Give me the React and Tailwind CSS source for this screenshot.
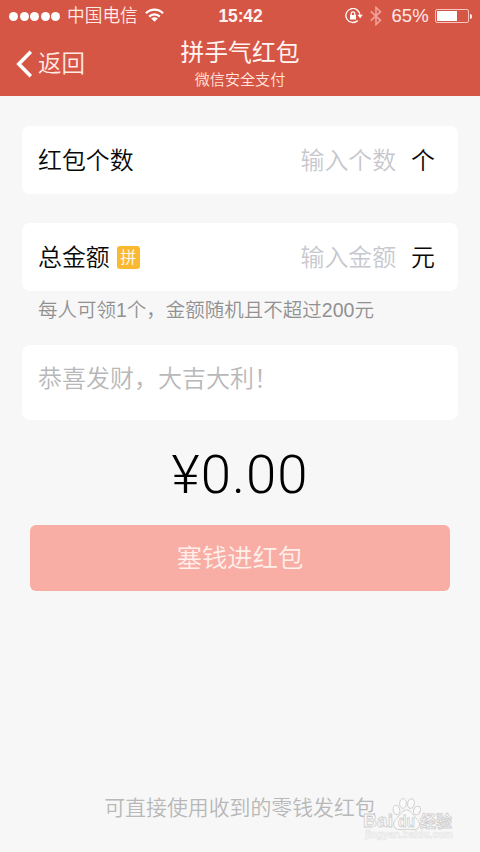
const cjk = "font-['Liberation_Sans','Noto_Sans_CJK_SC',sans-serif]";

function StatusBar() {
  return (
    <div className="flex h-8 items-center pl-[9px] pr-2 text-[#ffeae5]">
      <div className="flex w-[140px] flex-1 items-center">
        <div className="flex gap-[1.5px]">
          {[0, 1, 2, 3, 4].map((n) => (
            <span key={n} className="size-[9px] rounded-full bg-white" />
          ))}
        </div>
        <span className="ml-[7px] whitespace-nowrap text-[17.7px] font-[350] leading-8">中国电信</span>
        <svg className="ml-[7px] mt-[-2px]" width="19" height="14" viewBox="0 0 19 14" fill="none" stroke="#fff" strokeWidth="2.2">
          <path d="M1 5.2C5.8.4 13.2.4 18 5.2" />
          <path d="M4.200 8.600c3-3 7.600-3 10.600 0" />
          <path d="M9.500 13.800 6.200 10.500c1.800-1.700 4.800-1.700 6.600 0Z" fill="#fff" stroke="none" />
        </svg>
      </div>
      <span className="text-[17.500px] font-bold leading-8 tracking-[-0.1px] text-[#fff3f0]">15:42</span>
      <div className="flex flex-1 items-center justify-end">
        <svg width="18" height="16" viewBox="0 0 18 16" fill="none" stroke="#fff" strokeWidth="1.300">
          <path d="M12.800 12.500A7 7 0 1 1 14.900 7.300" />
          <path d="M12.400 6.800h5.400l-2.700 3.400Z" fill="#fff" stroke="none" />
          <rect x="5" y="7" width="6" height="4.500" fill="#fff" stroke="none" />
          <path d="M6.200 7.300V5.600a1.800 1.800 0 0 1 3.600 0v1.700" />
        </svg>
        <svg className="ml-[7px]" width="12" height="20" viewBox="0 0 12 20" fill="none" stroke="#eea298" strokeWidth="1.600">
          <path d="M.8 5.300 10.500 14.300 6 18.500V1.500l4.500 4.200L.8 14.700" />
        </svg>
        <span className="ml-[9px] text-[18.500px] leading-8 tracking-[0.2px]">65%</span>
        <span className="ml-[6px] flex h-[14px] w-[34px] rounded-[2px] border border-[#f8c5bd] p-px">
          <span className="w-[20px] bg-white" />
        </span>
        <span className="ml-px h-[5px] w-[2px] rounded-r bg-[#ffeae5]" />
      </div>
    </div>
  );
}

function NavBar() {
  return (
    <div className="grid h-16 grid-cols-3">
      <div className="flex h-16 items-center pl-4 text-[#ffeae5]">
        <svg width="17" height="28" viewBox="0 0 17 28" fill="none" stroke="#fff" strokeWidth="3.600">
          <path d="M14.800 1.800 2.800 14l12 12.200" />
        </svg>
        <span className="ml-[5px] text-[23.500px] font-[350] leading-8">返回</span>
      </div>
      <div className="flex flex-col items-center whitespace-nowrap pt-[5px]">
        <h1 className="text-[23.800px] font-normal leading-8 text-[#fff5f2]">拼手气红包</h1>
        <p className="text-[15.100px] font-[350] leading-[22px] text-[#ffe3dd]">微信安全支付</p>
      </div>
    </div>
  );
}

function Field({ label, badge, placeholder, unit }) {
  return (
    <div className="flex h-[68px] items-center rounded-[8px] bg-white pl-4 pr-[23px] text-[23.900px] font-[350] leading-[68px] text-[#080808]">
      <span className="pt-px">{label}</span>
      {badge && (
        <span className="ml-[7px] flex size-[23px] items-center justify-center rounded-[3px] bg-[#fbb931] pt-px text-[16px] leading-none text-white">
          {badge}
        </span>
      )}
      <span className="ml-auto pt-px text-[#c7c8cd]">{placeholder}</span>
      <span className="ml-[15px] pt-px">{unit}</span>
    </div>
  );
}

function Watermark() {
  return (
    <div className="absolute left-[362px] top-[796px] h-[48px] w-[94px]">
      <svg width="94" height="48" viewBox="0 0 94 48" fill="#fafafa" stroke="#cfcfcf" strokeWidth="1">
        <ellipse cx="34.500" cy="14" rx="3.300" ry="4.800" transform="rotate(-15 34.500 14)" />
        <ellipse cx="41" cy="7.500" rx="3.400" ry="4.800" />
        <ellipse cx="49" cy="7.500" rx="3.300" ry="4.800" transform="rotate(10 49 7.500)" />
        <ellipse cx="55" cy="14.500" rx="3.300" ry="4.500" transform="rotate(22 55 14.500)" />
        <path d="M44.500 14c-4 0-5.500 4-8.500 7-3.500 3.400-5.500 6-4 9.500 2 4.500 7.500 2.700 12.500 2.700s10.500 1.800 12.500-2.700c1.500-3.500-.5-6.100-4-9.500-3-3-4.500-7-8.500-7Z" />
        <g strokeWidth="0.800" fontFamily="Liberation Sans, Noto Sans CJK SC, sans-serif" fontWeight="bold">
          <text x="1" y="31" fontSize="19" textLength="30" lengthAdjust="spacingAndGlyphs">Bai</text>
          <text x="36" y="31" fontSize="16" textLength="17" lengthAdjust="spacingAndGlyphs">du</text>
          <text x="58" y="30.500" fontSize="16" textLength="32">经验</text>
          <text x="3" y="42" fontSize="10" textLength="88" lengthAdjust="spacingAndGlyphs" stroke="#e5e5e5" strokeWidth="0.600">jingyan.baidu.com</text>
        </g>
      </svg>
    </div>
  );
}

export default function App() {
  return (
    <div className={`relative flex h-[852px] w-[480px] flex-col overflow-hidden bg-[#f7f7f7] ${cjk}`}>
      <header className="h-24 shrink-0 bg-[#d65645]">
        <StatusBar />
        <NavBar />
      </header>
      <main className="flex flex-1 flex-col px-[22px] pt-[30px]">
        <Field label="红包个数" placeholder="输入个数" unit="个" />
        <div className="h-[29px]" />
        <Field label="总金额" badge="拼" placeholder="输入金额" unit="元" />
        <p className="h-[54px] whitespace-nowrap pl-4 text-[19.500px] font-[350] leading-[38px] text-[#919191]">
          每人可领1个，金额随机且不超过200元
        </p>
        <div className="h-[75px] rounded-[8px] bg-white pl-4 text-[24px] font-[350] leading-[68px] text-[#b8b8b8]">
          恭喜发财，大吉大利！
        </div>
        <div className="h-[105px] text-center font-[Roboto,sans-serif] text-[54.500px] font-light leading-[109px] tracking-[1px] text-black">
          ¥0.00
        </div>
        <button className="mx-2 h-[66px] rounded-[6px] bg-[#f8ada5] text-[25.300px] font-[350] leading-[66px] text-[#fff0ec]">
          塞钱进红包
        </button>
        <footer className="mb-[28px] mt-auto text-center text-[20.900px] font-[350] leading-8 text-[#b8b8b8]">
          可直接使用收到的零钱发红包
        </footer>
      </main>
      <Watermark />
    </div>
  );
}
